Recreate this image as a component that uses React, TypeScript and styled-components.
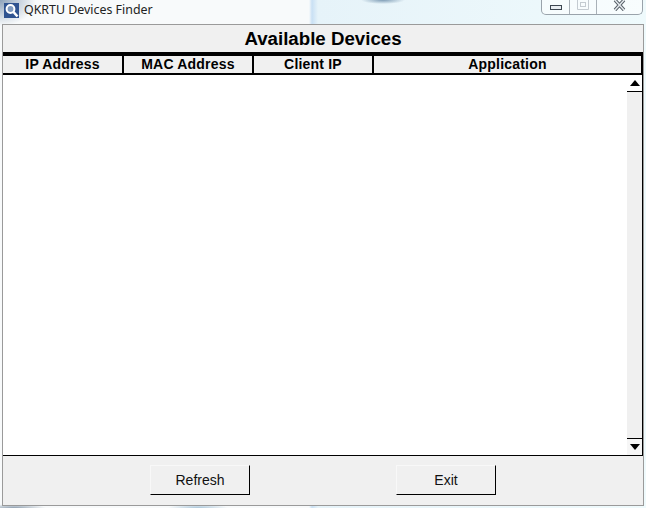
import React from 'react';
import styled, { createGlobalStyle } from 'styled-components';

const GlobalStyle = createGlobalStyle`
  html, body {
    margin: 0;
    padding: 0;
    width: 646px;
    height: 508px;
    overflow: hidden;
    font-family: "Liberation Sans", Arial, sans-serif;
  }
`;

// blurred desktop showing through the glass frame
const Frame = styled.div`
  width: 646px;
  height: 508px;
  box-sizing: border-box;
  display: flex;
  flex-direction: column;
  padding: 0 2px 2px;
  background:
    radial-gradient(ellipse 22px 4px at 383px 0, #7f9db6 0, transparent 100%),
    radial-gradient(ellipse 36px 26px at 0 0, #8ea3bb 0, transparent 100%),
    radial-gradient(ellipse 32px 4px at 14px 508px, #8e9fb0 0, transparent 100%),
    radial-gradient(ellipse 30px 4px at 198px 508px, #a9c6da 0, transparent 100%),
    linear-gradient(90deg, transparent 0, transparent 309px, #c9e0f4 312px, #e6f3f9 318px, #effafc 100%),
    #f8fafb;
`;

const TitleBar = styled.div`
  height: 24px;
  flex: none;
  display: flex;
  align-items: flex-start;
  margin: 0 -2px;
`;

const AppIcon = styled.svg`
  width: 15px;
  height: 15px;
  margin: 3px 0 0 4px;
  flex: none;
`;

const TitleText = styled.span`
  margin: 1px 0 0 5px;
  font-family: "Noto Sans", sans-serif;
  font-size: 12.4px;
  line-height: 17px;
  color: #222;
`;

const WindowControls = styled.div`
  margin-left: auto;
  margin-right: 3px;
  width: 102px;
  height: 15px;
  box-sizing: border-box;
  display: flex;
  border: 1px solid #9aa3ab;
  border-top: none;
  border-radius: 0 0 5px 5px;
  background: rgba(255, 255, 255, 0.55);
`;

const ControlButton = styled.div<{ $width: number; $top: number; $divider?: boolean }>`
  box-sizing: border-box;
  width: ${props => props.$width}px;
  display: flex;
  align-items: flex-start;
  justify-content: center;
  padding-top: ${props => props.$top}px;
  border-right: ${props => (props.$divider ? '1px solid #a9b1b8' : 'none')};
`;

const Panel = styled.div`
  flex: 1;
  display: flex;
  flex-direction: column;
  min-height: 0;
  background: #f0f0f0;
  border: 1px solid #9a9a9a;
`;

const Heading = styled.div`
  height: 31px;
  flex: none;
  display: flex;
  align-items: center;
  justify-content: center;
  padding-top: 1px;
  box-sizing: border-box;
  font-size: 18.7px;
  font-weight: 700;
  color: #000;
  border-bottom: 4px solid #000;
`;

const HeaderRow = styled.div`
  height: 19px;
  flex: none;
  box-sizing: border-box;
  display: flex;
  border-bottom: 2px solid #000;
`;

const HeaderCell = styled.div<{ $width?: number }>`
  box-sizing: border-box;
  width: ${props => (props.$width ? `${props.$width}px` : 'auto')};
  flex: ${props => (props.$width ? 'none' : '1')};
  display: flex;
  align-items: center;
  justify-content: center;
  padding-bottom: 2px;
  font-size: 14px;
  font-weight: 700;
  letter-spacing: 0.2px;
  color: #000;
  border-right: 2px solid #000;
`;

const ListArea = styled.div`
  flex: 1;
  min-height: 0;
  display: flex;
  background: #fff;
  border-bottom: 1px solid #000;
`;

const ListBody = styled.div`
  flex: 1;
`;

const ScrollBar = styled.div`
  width: 16px;
  flex: none;
  display: flex;
  flex-direction: column;
  background: #f0f0f0;
  box-sizing: border-box;
  border-right: 1px solid #000;
`;

const ScrollButton = styled.div<{ $down?: boolean }>`
  height: 16px;
  flex: none;
  display: flex;
  align-items: center;
  justify-content: center;
  background: ${props => (props.$down ? '#f6f6f6' : '#fff')};
  border-bottom: ${props => (props.$down ? 'none' : '1px solid #000')};
  border-top: ${props => (props.$down ? '1px solid #000' : 'none')};
`;

const ScrollTrack = styled.div`
  flex: 1;
`;

const Arrow = styled.div<{ $down?: boolean }>`
  width: 0;
  height: 0;
  border-left: 5px solid transparent;
  border-right: 5px solid transparent;
  border-bottom: ${props => (props.$down ? 'none' : '6px solid #000')};
  border-top: ${props => (props.$down ? '6px solid #000' : 'none')};
`;

const Footer = styled.div`
  height: 49px;
  flex: none;
  display: flex;
  box-sizing: border-box;
  padding: 9px 0 0 147px;
  gap: 146px;
`;

const Button = styled.button`
  width: 100px;
  height: 30px;
  padding: 0;
  box-sizing: border-box;
  font-family: "Liberation Sans", Arial, sans-serif;
  font-size: 14px;
  color: #111;
  background: #f0f0f0;
  border: 1px solid #f8f8f8;
  border-right-color: #000;
  border-bottom-color: #000;
`;

export default function App() {
  return (
    <Frame>
      <GlobalStyle />
      <TitleBar>
        <AppIcon viewBox="0 0 15 15">
          <rect width="15" height="15" fill="#2f5390" />
          <circle cx="6.5" cy="6" r="3.9" fill="#7f9ac0" stroke="#fff" strokeWidth="2" />
          <path d="M9.5 9 L13.5 13.5" stroke="#fff" strokeWidth="2.6" />
        </AppIcon>
        <TitleText>QKRTU Devices Finder</TitleText>
        <WindowControls>
          <ControlButton $width={28} $top={5} $divider>
            <svg width="12" height="5" viewBox="0 0 12 5">
              <rect x="0.5" y="0.5" width="11" height="4" fill="#e8edf1" stroke="#3c4650" />
            </svg>
          </ControlButton>
          <ControlButton $width={27} $top={0} $divider>
            <svg width="12" height="10" viewBox="0 0 12 10">
              <path d="M0.5 0 V9.5 H11.5 V0" fill="none" stroke="#c4cbd1" />
              <rect x="3.5" y="2.5" width="5" height="4" fill="none" stroke="#c4cbd1" />
            </svg>
          </ControlButton>
          <ControlButton $width={45} $top={0}>
            <svg width="13" height="11" viewBox="0 0 13 11">
              <path d="M2 0 L11 10 M11 0 L2 10" stroke="#59626a" strokeWidth="3.4" />
              <path d="M2 0 L11 10 M11 0 L2 10" stroke="#e6ebef" strokeWidth="1.4" />
            </svg>
          </ControlButton>
        </WindowControls>
      </TitleBar>
      <Panel>
        <Heading>Available Devices</Heading>
        <HeaderRow>
          <HeaderCell $width={121}>IP Address</HeaderCell>
          <HeaderCell $width={130}>MAC Address</HeaderCell>
          <HeaderCell $width={120}>Client IP</HeaderCell>
          <HeaderCell>Application</HeaderCell>
        </HeaderRow>
        <ListArea>
          <ListBody />
          <ScrollBar>
            <ScrollButton>
              <Arrow />
            </ScrollButton>
            <ScrollTrack />
            <ScrollButton $down>
              <Arrow $down />
            </ScrollButton>
          </ScrollBar>
        </ListArea>
        <Footer>
          <Button>Refresh</Button>
          <Button>Exit</Button>
        </Footer>
      </Panel>
    </Frame>
  );
}
